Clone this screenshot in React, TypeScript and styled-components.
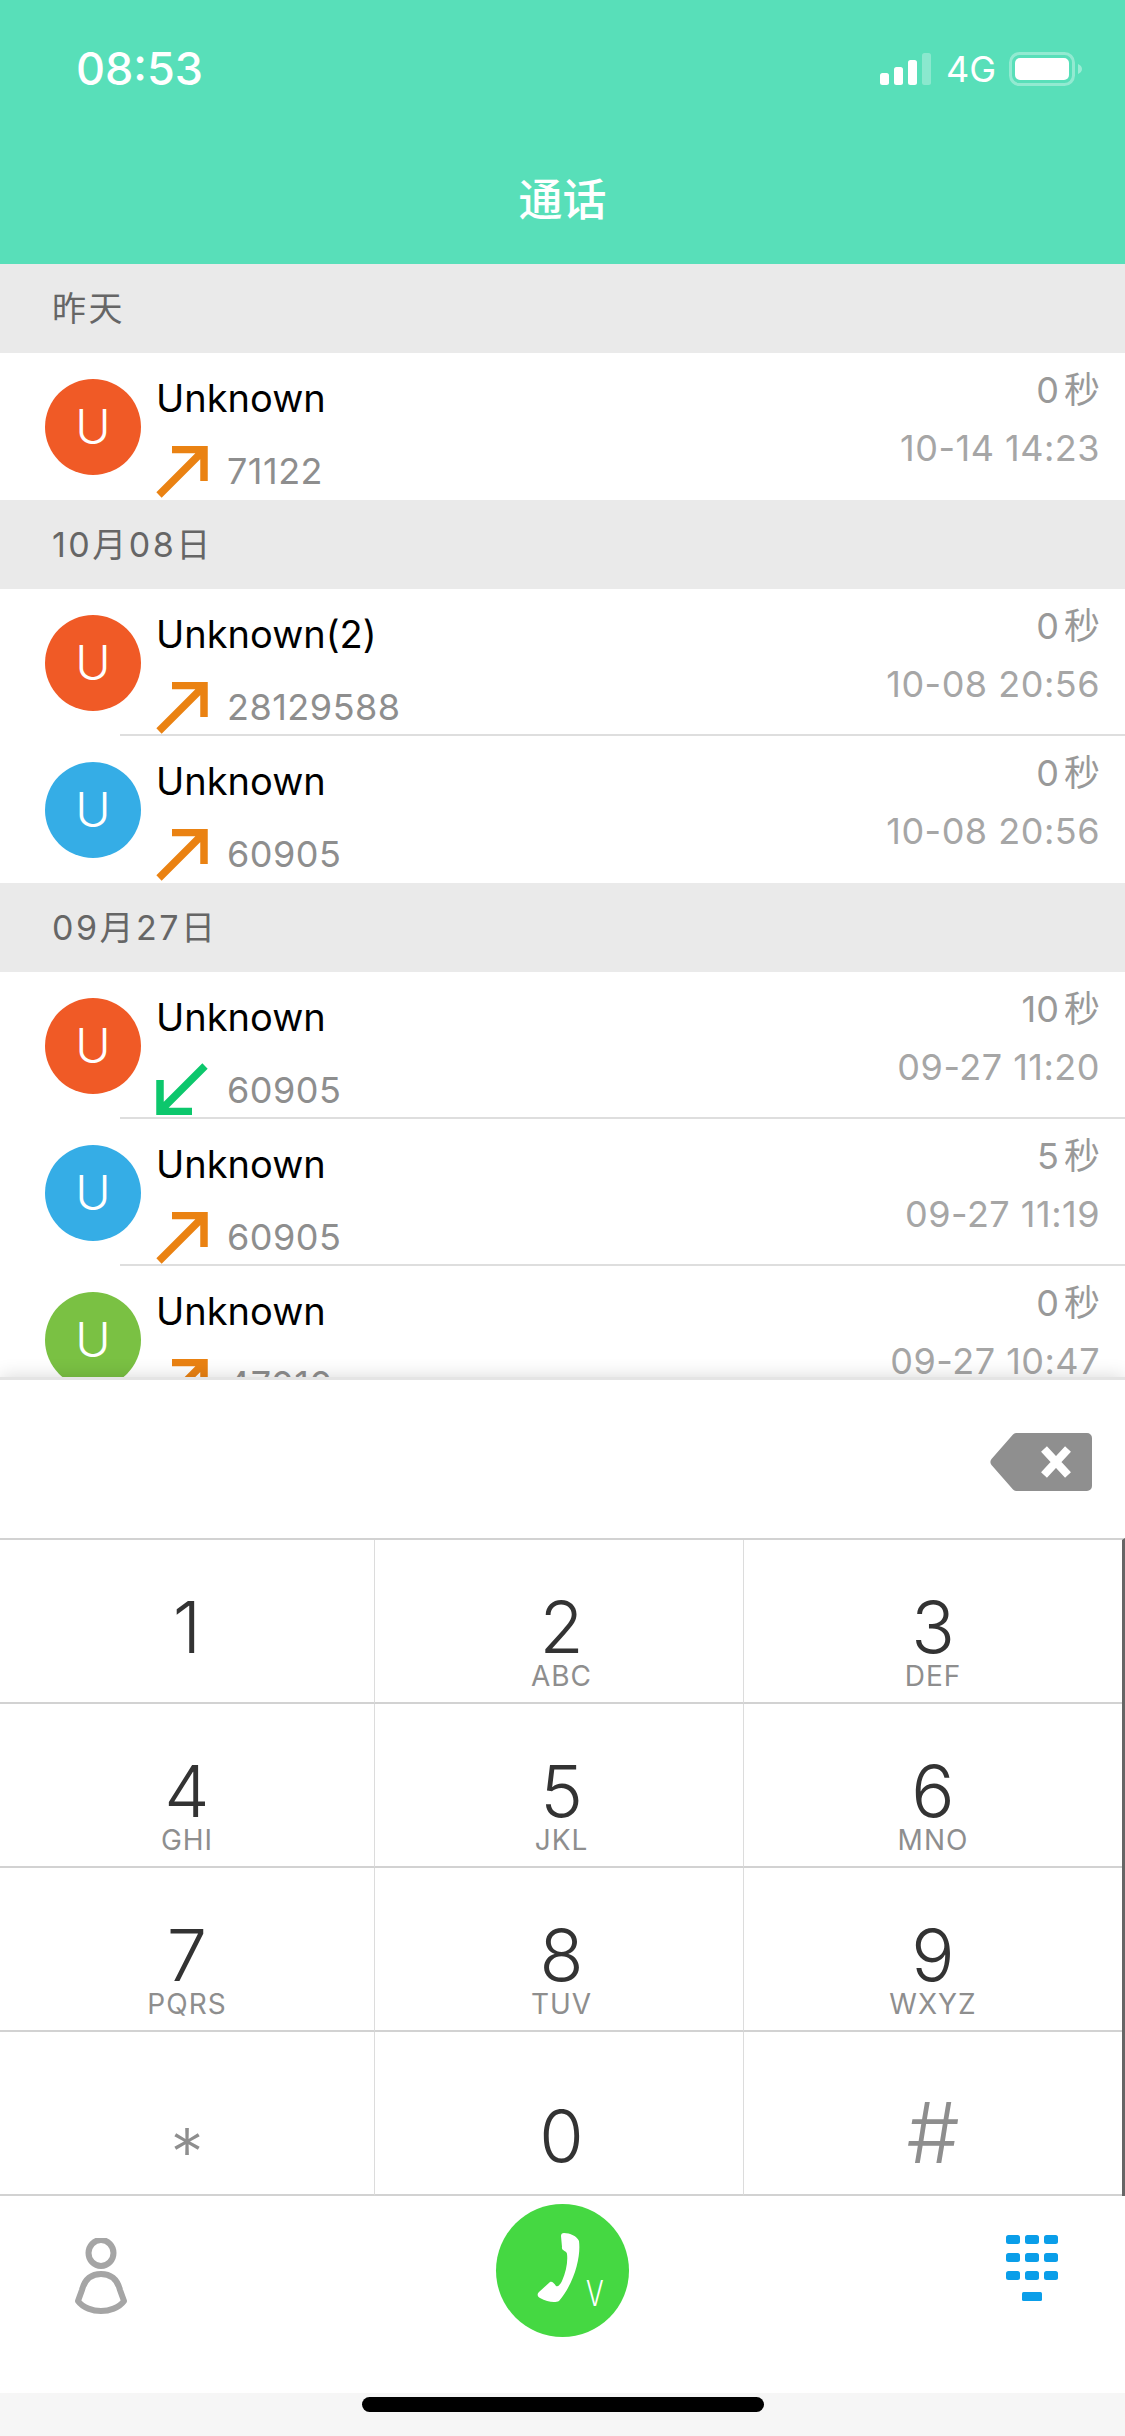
import styled, { createGlobalStyle } from 'styled-components'

const GlobalStyle = createGlobalStyle`
  html, body {
    margin: 0;
    padding: 0;
    background: #fff;
  }
  * {
    box-sizing: border-box;
  }
`

const FONT = `Inter, "Noto Sans CJK SC", sans-serif`

const Page = styled.div`
  width: 1125px;
  height: 2436px;
  display: flex;
  flex-direction: column;
  overflow: hidden;
  font-family: ${FONT};
  background: #fff;
`

const Header = styled.header`
  height: 264px;
  flex: none;
  background: #58dfb9;
  color: #fff;
  display: flex;
  flex-direction: column;
`

const StatusBar = styled.div`
  height: 170px;
  padding: 46px 43px 0 76px;
  display: flex;
  justify-content: space-between;
  align-items: flex-start;
`

const Clock = styled.span`
  font-size: 45px;
  line-height: 46px;
  font-weight: 500;
`

const StatusIcons = styled.div`
  display: flex;
  align-items: center;
  height: 46px;
`

const NetworkLabel = styled.span`
  font-size: 36px;
  line-height: 46px;
  margin: 0 13px 0 15px;
`

const Title = styled.h1`
  margin: 0;
  text-align: center;
  font-size: 44px;
  line-height: 60px;
  font-weight: 500;
`

const CallList = styled.div`
  flex: 1;
  min-height: 0;
  overflow: hidden;
`

const SectionLabel = styled.div`
  height: 89px;
  padding-left: 52px;
  background: #eaeaea;
  color: #666;
  font-size: 34px;
  line-height: 89px;
  letter-spacing: 2.5px;
`

const Row = styled.div`
  height: 147px;
  display: flex;
  position: relative;
  background: #fff;
  padding-left: 45px;
`

const Divider = styled.div`
  position: absolute;
  left: 120px;
  right: 0;
  bottom: 0;
  height: 2px;
  background: #dedede;
`

const Avatar = styled.div<{ $color: string }>`
  width: 96px;
  height: 96px;
  margin-top: 26px;
  flex: none;
  border-radius: 50%;
  background: ${(p) => p.$color};
  color: #fff;
  font-size: 48px;
  line-height: 96px;
  text-align: center;
  font-weight: 300;
`

const Info = styled.div`
  margin-left: 15px;
  flex: 1;
  display: flex;
  flex-direction: column;
`

const Name = styled.div`
  color: #000;
  font-size: 38px;
  line-height: 46px;
  margin-top: 22px;
`

const NumberLine = styled.div`
  display: flex;
  align-items: flex-end;
  margin-top: 25px;
  gap: 19px;
`

const CallNumber = styled.span`
  color: #8e8e8e;
  font-size: 36px;
  line-height: 44px;
  letter-spacing: 0.5px;
  margin-bottom: 5px;
`

const Meta = styled.div`
  padding-right: 25px;
  text-align: right;
  display: flex;
  flex-direction: column;
  align-items: flex-end;
`

const Duration = styled.div`
  color: #999;
  font-size: 36px;
  line-height: 44px;
  margin-top: 15px;
  word-spacing: -5px;
`

const Stamp = styled.div`
  color: #a6a6a6;
  font-size: 36px;
  line-height: 44px;
  margin-top: 14px;
  letter-spacing: 0.5px;
`

const DialPanel = styled.div`
  flex: none;
  position: relative;
  background: #fff;
  border-top: 3px solid #e4e4e4;
  box-shadow: 0 0 18px rgba(0, 0, 0, 0.16);
`

const InputLine = styled.div`
  height: 158px;
  padding: 53px 33px 0 0;
  display: flex;
  justify-content: flex-end;
  align-items: flex-start;
  background: #fff;
`

const KeyGrid = styled.div`
  display: grid;
  grid-template-columns: 375px 369px 378px;
  grid-auto-rows: 164px;
  border-top: 2px solid #d2d2d2;
  border-right: 3px solid #666;
  background: #fff;
`

const Key = styled.div<{ $edge: boolean; $top: number }>`
  display: flex;
  flex-direction: column;
  align-items: center;
  border-right: ${(p) => (p.$edge ? 'none' : '1px solid #dcdcdc')};
  border-bottom: 2px solid #d2d2d2;
  padding-top: ${(p) => p.$top}px;

  &:nth-child(3n + 2) {
    padding-left: 5px;
  }
`

const Digit = styled.span<{ $muted: boolean; $size: number }>`
  color: ${(p) => (p.$muted ? '#8e8e8e' : '#333')};
  font-size: ${(p) => p.$size}px;
  line-height: 64px;
  font-weight: 300;
`

const Letters = styled.span`
  color: #8e8e8e;
  font-size: 28px;
  line-height: 32px;
  margin-top: 1px;
  letter-spacing: 1px;
`

const BottomBar = styled.div`
  height: 197px;
  display: grid;
  grid-template-columns: 1fr 133px 1fr;
  background: #fff;
`

const ContactsTab = styled.div`
  padding: 42px 0 0 75px;
`

const CallButton = styled.div`
  width: 133px;
  height: 133px;
  margin-top: 8px;
  border-radius: 50%;
  background: #45d842;
  position: relative;
`

const VideoMark = styled.span`
  position: absolute;
  left: 87px;
  top: 69px;
  color: #fff;
  font-size: 35px;
  line-height: 40px;
  font-weight: 300;
  transform: scaleX(0.75);
`

const PadTab = styled.div`
  padding: 39px 67px 0 0;
  display: flex;
  justify-content: flex-end;
  align-items: flex-start;
`

const HomeArea = styled.div`
  flex: none;
  position: relative;
  height: 43px;
  background: #f6f6f6;
  padding-top: 4px;
  display: flex;
  justify-content: center;
  align-items: flex-start;
`

const HomeBar = styled.div`
  width: 402px;
  height: 15px;
  border-radius: 8px;
  background: #000;
`

const SignalIcon = () => (
  <svg width="51" height="32" viewBox="0 0 51 32">
    <rect x="0" y="20" width="9" height="12" rx="2.5" fill="#fff" />
    <rect x="14" y="14" width="9" height="18" rx="2.5" fill="#fff" />
    <rect x="28" y="7" width="9" height="25" rx="2.5" fill="#fff" />
    <rect x="42" y="0" width="9" height="32" rx="2.5" fill="#fff" fillOpacity="0.3" />
  </svg>
)

const BatteryIcon = () => (
  <svg width="73" height="34" viewBox="0 0 73 34">
    <rect x="1.5" y="1.5" width="63" height="31" rx="9" fill="none" stroke="#fff" strokeOpacity="0.35" strokeWidth="3" />
    <rect x="6" y="6" width="54" height="22" rx="5" fill="#fff" />
    <path d="M69 12c2.5 1 4 2.800 4 5s-1.500 4-4 5z" fill="#fff" fillOpacity="0.4" />
  </svg>
)

// outgoing points up-right; incoming is the same arrow turned half way round
const DirectionArrow = ({ incoming }: { incoming?: boolean }) => (
  <svg
    width="52"
    height="52"
    viewBox="0 0 52 52"
    style={{ flex: 'none', transform: incoming ? 'rotate(180deg) translateY(2px)' : undefined }}
  >
    <path
      d="M16 3.500H48V35M48 4L3 49"
      fill="none"
      stroke={incoming ? '#0cc76c' : '#ea8212'}
      strokeWidth="7.5"
    />
  </svg>
)

const BackspaceIcon = () => (
  <svg width="102" height="58" viewBox="0 0 102 58">
    <path
      d="M24 0H97a5 5 0 0 1 5 5V53a5 5 0 0 1-5 5H26a4 4 0 0 1-3-1.500L1.500 32a5 5 0 0 1 0-6L23 1.500A4 4 0 0 1 26 0Z"
      fill="#8f8f8f"
    />
    <path d="M54 16L78 42M78 16L54 42" stroke="#fff" strokeWidth="8" />
  </svg>
)

const PersonIcon = () => (
  <svg width="52" height="76" viewBox="0 0 52 76">
    <ellipse cx="26" cy="15" rx="12.500" ry="13" fill="none" stroke="#a5a5a5" strokeWidth="6" />
    <path
      d="M26 36C14 36 9 44 7 52L3 63C8 70 18 73 26 73C34 73 44 70 49 63L45 52C43 44 38 36 26 36Z"
      fill="none"
      stroke="#a5a5a5"
      strokeWidth="6"
      strokeLinejoin="round"
    />
  </svg>
)

const PhoneGlyph = () => (
  <svg width="44" height="72" viewBox="0 0 44 72" style={{ position: 'absolute', left: 41, top: 28 }}>
    <path
      d="M27 1C33 1 40 4 42 9C44 24 38 50 22 69C18 71 10 70 3 66C0 64 0 62 2 60L13 50C15 49 17 51 19 54C21 55 23 53 25 49C29 40 31 30 30 22C30 19 24 19 25 15L24 4C24 2 25 1 27 1Z"
      fill="#fff"
    />
  </svg>
)

const KeypadIcon = () => (
  <svg width="52" height="66" viewBox="0 0 52 66">
    {[0, 1, 2].map((row) =>
      [0, 19, 38].map((x) => <rect key={`${row}-${x}`} x={x} y={row * 18} width="14" height="9" rx="2.500" fill="#0a9ee9" />)
    )}
    <rect x="16" y="57" width="20" height="9" rx="1.500" fill="#0a9ee9" />
  </svg>
)

const SECTIONS = [
  {
    label: '昨天',
    calls: [{ name: 'Unknown', number: '71122', duration: '0 秒', stamp: '10-14 14:23', color: '#f05a26' }],
  },
  {
    label: '10月08日',
    calls: [
      { name: 'Unknown(2)', number: '28129588', duration: '0 秒', stamp: '10-08 20:56', color: '#f05a26' },
      { name: 'Unknown', number: '60905', duration: '0 秒', stamp: '10-08 20:56', color: '#35ade6' },
    ],
  },
  {
    label: '09月27日',
    calls: [
      { name: 'Unknown', number: '60905', duration: '10 秒', stamp: '09-27 11:20', color: '#f05a26', incoming: true },
      { name: 'Unknown', number: '60905', duration: '5 秒', stamp: '09-27 11:19', color: '#35ade6' },
      { name: 'Unknown', number: '47010', duration: '0 秒', stamp: '09-27 10:47', color: '#7ac143' },
    ],
  },
]

const KEYS = [
  { digit: '1', letters: '', top: 55, size: 72 },
  { digit: '2', letters: 'ABC', top: 55, size: 72 },
  { digit: '3', letters: 'DEF', top: 55, size: 72 },
  { digit: '4', letters: 'GHI', top: 55, size: 72 },
  { digit: '5', letters: 'JKL', top: 55, size: 72 },
  { digit: '6', letters: 'MNO', top: 55, size: 72 },
  { digit: '7', letters: 'PQRS', top: 55, size: 72 },
  { digit: '8', letters: 'TUV', top: 55, size: 72 },
  { digit: '9', letters: 'WXYZ', top: 55, size: 72 },
  // the bottom row sits lower in its cells than the digits above
  { digit: '*', letters: '', top: 88, size: 66 },
  { digit: '0', letters: '', top: 72, size: 72 },
  { digit: '#', letters: '', top: 69, size: 84 },
]

export default function App() {
  return (
    <Page>
      <GlobalStyle />
      <Header>
        <StatusBar>
          <Clock>08:53</Clock>
          <StatusIcons>
            <SignalIcon />
            <NetworkLabel>4G</NetworkLabel>
            <BatteryIcon />
          </StatusIcons>
        </StatusBar>
        <Title>通话</Title>
      </Header>

      <CallList>
        {SECTIONS.map((section) => (
          <div key={section.label}>
            <SectionLabel>{section.label}</SectionLabel>
            {section.calls.map((call, idx) => (
              <Row key={idx}>
                <Avatar $color={call.color}>U</Avatar>
                <Info>
                  <Name>{call.name}</Name>
                  <NumberLine>
                    <DirectionArrow incoming={call.incoming} />
                    <CallNumber>{call.number}</CallNumber>
                  </NumberLine>
                </Info>
                <Meta>
                  <Duration>{call.duration}</Duration>
                  <Stamp>{call.stamp}</Stamp>
                </Meta>
                {idx < section.calls.length - 1 && <Divider />}
              </Row>
            ))}
          </div>
        ))}
      </CallList>

      <DialPanel>
        <InputLine>
          <BackspaceIcon />
        </InputLine>
        <KeyGrid>
          {KEYS.map((key, idx) => (
            <Key key={key.digit} $edge={idx % 3 === 2} $top={key.top}>
              <Digit $muted={key.digit === '*' || key.digit === '#'} $size={key.size}>
                {key.digit}
              </Digit>
              {key.letters && <Letters>{key.letters}</Letters>}
            </Key>
          ))}
        </KeyGrid>
        <BottomBar>
          <ContactsTab>
            <PersonIcon />
          </ContactsTab>
          <CallButton>
            <PhoneGlyph />
            <VideoMark>V</VideoMark>
          </CallButton>
          <PadTab>
            <KeypadIcon />
          </PadTab>
        </BottomBar>
      </DialPanel>
      <HomeArea>
        <HomeBar />
      </HomeArea>
    </Page>
  )
}
